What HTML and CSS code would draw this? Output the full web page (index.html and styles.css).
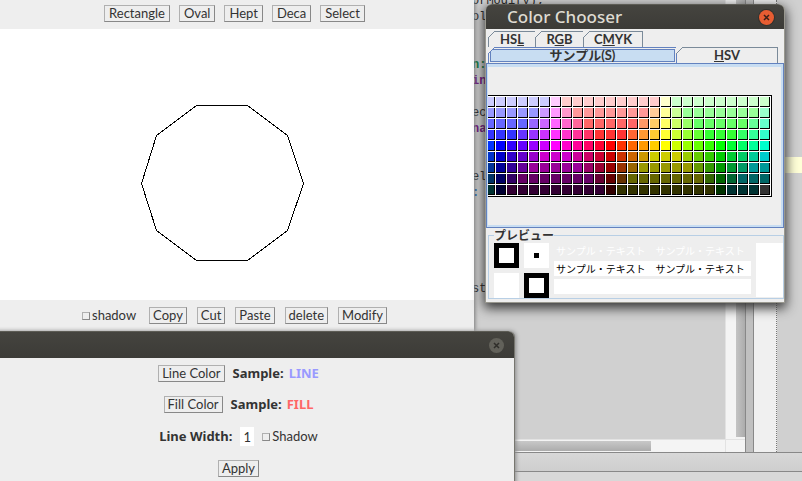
FILE: index.html
```html
<!DOCTYPE html>
<html lang="ja">
<head>
<meta charset="utf-8">
<title>Color Chooser</title>
<link rel="stylesheet" href="styles.css">
</head>
<body>
<div class="ide">
  <div class="ide-main">
    <div class="editor">
<pre class="code">orModify);
ol


<span class="green">n:</span>
<span class="purple">in</span>

ec
<span class="purple">na</span>


el
<span class="blue">:</span>





st</pre>
      <div class="vscroll"><div class="vthumb"></div></div>
      <div class="hscroll"><div class="hthumb"></div></div>
      <div class="corner"></div>
    </div>
    <div class="splitter"></div>
    <div class="gutter"></div>
    <div class="side-editor"><div class="current-line"></div></div>
  </div>
  <div class="ide-strip"></div>
  <div class="ide-status"></div>
</div>

<main class="window draw-window">
  <div class="toolbar toolbar-top">
    <button class="btn">Rectangle</button>
    <button class="btn">Oval</button>
    <button class="btn">Hept</button>
    <button class="btn">Deca</button>
    <button class="btn">Select</button>
  </div>
  <div class="canvas">
    <svg class="decagon" width="164" height="158" viewBox="0 0 164 158" shape-rendering="crispEdges">
      <polygon points="56.5,1.5 107.5,1.5 147.5,31.5 163.5,79.5 147.5,126.5 107.5,156.5 56.5,156.5 16.5,126.5 1.5,79.5 16.5,31.5" fill="none" stroke="#000"/>
    </svg>
  </div>
  <div class="toolbar toolbar-bottom">
    <label class="check"><input type="checkbox">shadow</label>
    <button class="btn">Copy</button>
    <button class="btn">Cut</button>
    <button class="btn">Paste</button>
    <button class="btn">delete</button>
    <button class="btn">Modify</button>
  </div>
</main>

<section class="window style-window">
  <header class="titlebar">
    <button class="close" aria-label="Close"><svg width="15" height="15" viewBox="0 0 15 15"><path d="M5 5l5 5M10 5l-5 5" stroke="#2f2e2a" stroke-width="1.5"/></svg></button>
  </header>
  <div class="form">
    <div class="row"><button class="btn">Line Color</button><span class="label">Sample:</span><span class="label line">LINE</span></div>
    <div class="row"><button class="btn">Fill Color</button><span class="label">Sample:</span><span class="label fill">FILL</span></div>
    <div class="row"><label class="label" for="width">Line Width:</label><input class="width" id="width" type="text" value="1"><label class="check"><input type="checkbox">Shadow</label></div>
    <div class="row"><button class="btn">Apply</button></div>
  </div>
</section>

<section class="window chooser">
  <header class="titlebar active">
    <h1>Color Chooser</h1>
    <button class="close" aria-label="Close"><svg width="15" height="15" viewBox="0 0 15 15"><path d="M5 5l5 5M10 5l-5 5" stroke="#3b2018" stroke-width="1.5"/></svg></button>
  </header>
  <div class="chooser-body">
    <div class="tabs tabs-back">
      <button class="tab"><svg class="cut" width="7" height="7"><path class="bg" d="M0 0H7L0 7z"/><path class="edge" d="M0 7L7 0"/></svg>HS<u>L</u></button>
      <button class="tab"><svg class="cut" width="7" height="7"><path class="bg" d="M0 0H7L0 7z"/><path class="edge" d="M0 7L7 0"/></svg>R<u>G</u>B</button>
      <button class="tab wide"><svg class="cut" width="7" height="7"><path class="bg" d="M0 0H7L0 7z"/><path class="edge" d="M0 7L7 0"/></svg>C<u>M</u>YK</button>
    </div>
    <div class="tabs tabs-front">
      <button class="tab selected"><svg class="cut" width="7" height="7"><path class="bg" d="M0 0H7L0 7z"/><path class="edge" d="M0 7L7 0"/></svg><span>サンプル(S)</span></button>
      <button class="tab"><svg class="cut" width="7" height="7"><path class="bg" d="M0 0H7L0 7z"/><path class="edge" d="M0 7L7 0"/></svg><u>H</u>SV</button>
    </div>
    <div class="panel"><div class="swatches" id="swatches"></div></div>
    <div class="preview-wrap">
      <fieldset class="preview">
        <legend>プレビュー</legend>
        <div class="squares">
          <i class="sq frame"></i><i class="sq dot"></i>
          <i class="sq"></i><i class="sq frame"></i>
        </div>
        <div class="samples">
          <p class="pale"><span>サンプル・テキスト</span><span>サンプル・テキスト</span></p>
          <p class="dark"><span>サンプル・テキスト</span><span>サンプル・テキスト</span></p>
          <p class="blank"></p>
        </div>
        <div class="current"></div>
      </fieldset>
    </div>
  </div>
</section>
<script src="swatches.js"></script>
</body>
</html>
```
FILE: styles.css
```css
* { box-sizing: border-box; }
body {
  margin: 0;
  height: 100vh;
  position: relative;
  overflow: hidden;
  background: #d0d0d0;
  color: #333;
  font: 13px/15px Lato, "Noto Sans CJK JP", sans-serif;
}
button, input { font: inherit; color: inherit; margin: 0; }

/* editor behind the windows */
.ide { height: 100vh; padding-left: 472px; display: flex; flex-direction: column; }
.ide-main { flex: 1; min-height: 0; display: flex; }
.editor {
  width: 273px;
  display: grid;
  grid-template-columns: 1fr 20px;
  grid-template-rows: 1fr 13px;
}
.code {
  margin: -7px 0 0;
  height: 0;
  font: 12px/16px "Liberation Mono", monospace;
  color: #222;
}
.green { color: #087a3a; font-weight: bold; }
.purple { color: #701080; font-weight: bold; }
.blue { color: #1060b0; font-weight: bold; }
.vscroll { background: #f4f4f4; border-left: 1px solid #e2e2e2; padding: 0 0 2px 10px; }
.vthumb { height: 100%; background: linear-gradient(90deg, #c4c4c4, #acacac); }
.hscroll { background: #f4f4f4; border-top: 1px solid #e2e2e2; padding: 1px 0; }
.hthumb { width: 179px; height: 10px; background: linear-gradient(#c8c8c8, #acacac); }
.corner { background: #f4f4f4; border: solid #e2e2e2; border-width: 1px 0 0 1px; }
.splitter { width: 9px; background: #c0c0c0; border: solid #888; border-width: 0 1px; }
.gutter { width: 23px; background: #f0f0f0; border-right: 1px dotted #777; }
.side-editor { flex: 1; padding: 157px 0 0 8px; }
.current-line { height: 16px; background: #ffffd7; }
.ide-strip { height: 20px; background: linear-gradient(#d8d8d8, #cecece); border: solid #888; border-width: 1px 0; }
.ide-status { height: 9px; background: #d8d8d8; }

/* windows */
.window { position: absolute; background: #eee; }
.draw-window { left: -5px; top: 0; width: 479px; box-shadow: 1px 0 4px #777; }
.toolbar { height: 31px; display: flex; justify-content: center; align-items: center; gap: 9px; }
.toolbar-top { height: 29px; padding-bottom: 2px; }
.toolbar-top .btn { padding: 0 4px; }
.toolbar-bottom { gap: 10px; }
.toolbar-bottom .check { margin-right: 3px; }
.canvas { height: 271px; background: #fff; padding: 75px 0 0 145px; }
.decagon { display: block; }
.btn {
  height: 17px;
  padding: 0 3px;
  line-height: 15px;
  background: #eee;
  border: 1px solid;
  border-color: #b0b0b0 #888 #888 #b0b0b0;
}
.check { display: flex; align-items: center; gap: 2px; }
.check input {
  appearance: none;
  width: 8px;
  height: 8px;
  border: 1px solid;
  border-color: #b0b0b0 #888 #888 #b0b0b0;
}

.titlebar {
  display: flex;
  align-items: center;
  justify-content: space-between;
  background: linear-gradient(#45443f, #3c3b37);
  border-top: 1px solid #5d5c55;
  border-radius: 0 6px 0 0;
}
.close {
  width: 15px;
  height: 15px;
  padding: 0;
  margin-left: auto;
  border: 0;
  border-radius: 50%;
  background: #62615a;
}
.close svg { display: block; }
.style-window {
  left: -37px;
  top: 331px;
  width: 552px;
  height: 160px;
  border-radius: 0 6px 0 0;
  border-right: 1px solid #77766f;
  box-shadow: 1px 0 4px #888;
}
.style-window .titlebar { height: 27px; padding-right: 10px; }
.form { padding-top: 7px; display: grid; gap: 14px; }
.row { display: flex; justify-content: center; align-items: center; gap: 8px; }
.label { font: bold 13px/15px "Noto Sans", sans-serif; }
.label + .label { margin-left: -3px; }
.line { color: #9999ff; }
.fill { color: #ff6666; }
.width { width: 14px; height: 19px; padding: 0; border: 0; background: #fff; text-align: center; }

.chooser {
  left: 485px;
  top: 4px;
  width: 300px;
  border: 1px solid #99988f;
  border-top: 0;
  border-radius: 6px 6px 0 0;
  box-shadow: 0 4px 12px 1px #333;
}
.titlebar.active { height: 25px; padding: 0 10px 0 21px; border-radius: 6px 6px 0 0; }
.titlebar.active .close { background: #e75d32; box-shadow: 0 0 0 1px #33322e; }
h1 { margin: 0; font: 500 17px/20px "Noto Sans", sans-serif; color: #dfdbd2; }
.chooser-body { padding-top: 2px; }
.tabs { display: flex; }
.tabs-back { padding-left: 2px; }
.tabs-front { padding: 0 6px 0 2px; }
.tab {
  position: relative;
  width: 48px;
  height: 16px;
  padding: 0;
  background: #eee;
  border: 1px solid #7a8a99;
  border-width: 1px 1px 0 1px;
  font-weight: bold;
  line-height: 15px;
}
.tab + .tab { border-left: 0; }
.tab.wide { width: 59px; }
.tabs-front .tab { flex: 1; }
.tabs-front .selected {
  flex: none;
  width: 189px;
  background: #c8ddf2;
  border-color: #6382bf;
  box-shadow: inset 0 0 0 1px #eee, inset 0 0 0 2px #6382bf;
}
.cut { position: absolute; left: -1px; top: -1px; }
.cut .bg { fill: #eee; }
.cut .edge { stroke: #7a8a99; fill: none; }
.selected .cut .edge { stroke: #6382bf; }
.panel {
  height: 165px;
  padding-top: 31px;
  border: 1px solid #6382bf;
  box-shadow: inset 1px 3px #c8ddf2, inset -2px -2px #c8ddf2;
}
.swatches {
  margin: 0 11px 0 1px;
  border: solid #000;
  border-width: 1px 1px 1px 0;
  padding: 1px 1px 1px 0;
  background: #fff;
  overflow: hidden;
  display: grid;
  grid-template-columns: repeat(26, 10px);
  gap: 1px;
  justify-content: end;
}
.swatches i { height: 10px; border: solid #000; border-width: 0 1px 1px 0; }

.preview-wrap { height: 74px; padding: 0 0 3px 2px; }
.preview {
  margin: 0;
  min-width: 0;
  height: 71px;
  padding: 0 0 0 5px;
  border: 1px solid #b8cfe5;
  display: flex;
  gap: 5px;
}
legend { padding: 0; font-weight: bold; font-size: 12px; line-height: 15px; }
.squares { display: grid; grid-template: 25px 25px / 25px 25px; gap: 5px; }
.sq { background: #fff; }
.frame { border: 5px solid #000; }
.dot { border: 10px solid #fff; background: #000; }
.samples { width: 197px; display: grid; grid-template-rows: 15px 15px 15px; gap: 3px; align-content: start; }
.samples p { margin: 0; padding-left: 2px; display: flex; gap: 10px; font: 10px/15px "Noto Sans CJK JP", sans-serif; }
.pale { color: #fff; }
.dark, .blank { background: #fff; }
.dark { color: #000; }
.current { flex: 1; height: 54px; background: #fff; }
```
FILE: swatches.js
```js
// Each row is a list of colours; "*n" repeats the colour n times.
const rows = [
  "ccf*6 fcf fcc*9 ffc cfc*9",
  "99f*5 c9f f9f f9c f99*7 fc9 ff9 cf9 9f9*7 9fc",
  "66f*4 96f c6f f6f f6c f69 f66*5 f96 fc6 ff6 cf6 9f6 6f6*5 6f9 6fc",
  "33f*3 63f 93f c3f f3f f3c f39 f36 f33*3 f63 f93 fc3 ff3 cf3 9f3 6f3 3f3*3 3f6 3f9 3fc",
  "03f 00f 30f 60f 90f c0f f0f f0c f09 f06 f03 f00 f30 f60 f90 fc0 ff0 cf0 9f0 6f0 3f0 0f0 0f3 0f6 0f9 0fc",
  "03c 00c 30c 60c 90c c0c*3 c09 c06 c03 c00 c30 c60 c90 cc0*3 9c0 6c0 3c0 0c0 0c3 0c6 0c9 0cc",
  "039 009 309 609 909*5 906 903 900 930 960 990*5 690 390 090 093 096 099*2",
  "036 006 306 606*7 603 600 630 660*7 360 060 063 066*3",
  "033 003 303*9 300 330*9 030 033*3 333"
];
const box = document.getElementById("swatches");
rows.forEach(row => row.split(" ").forEach(run => {
  const [color, count = 1] = run.split("*");
  for (let i = 0; i < count; i++) {
    const cell = document.createElement("i");
    cell.style.background = "#" + color;
    box.append(cell);
  }
}));
```
